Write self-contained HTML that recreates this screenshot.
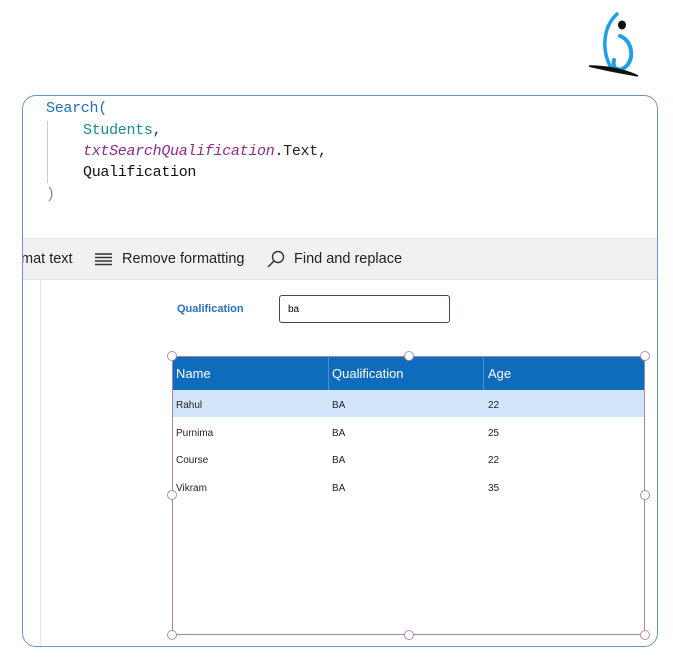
<!DOCTYPE html>
<html><head><style>
body{margin:0;width:673px;height:659px;background:#fff;position:relative;overflow:hidden;font-family:"Liberation Sans",sans-serif}
.frame{position:absolute;left:22px;top:95px;width:634px;height:550px;border:1.5px solid #6f93bd;border-radius:14px;overflow:hidden;background:#fff}
.code{position:absolute;font-family:"Liberation Mono",monospace;font-size:15px;white-space:pre;line-height:21.5px;letter-spacing:-0.3px}
.tb{position:absolute;left:0;top:142px;width:100%;height:40px;background:#f1f1f1;border-bottom:1px solid #e2e2e2;border-top:1px solid #e6e6e6}
.tb span{position:absolute;top:12px;font-size:14.5px;color:#222}
.abs{position:absolute}
.h{position:absolute;width:8px;height:8px;border:1.5px solid #b08cb0;border-radius:50%;background:#fff}
.cell{position:absolute;font-size:10px;color:#222}
</style></head><body>
<svg class="abs" style="left:586px;top:8px" width="60" height="70" viewBox="0 0 60 70">
<path d="M31 6 C18 18 14 40 26 62" fill="none" stroke="#1da1e6" stroke-width="3.5" stroke-linecap="round"/>
<path d="M34 28 C46 32 50 52 38 60 C32 64 26 60 28 52" fill="none" stroke="#1da1e6" stroke-width="4" stroke-linecap="round"/>
<ellipse cx="36" cy="17" rx="4" ry="4.5" fill="#111"/>
<path d="M3 58 C22 58 40 62 52 68 C36 65 18 62 3 58Z" fill="#111" stroke="#111" stroke-width="1.5"/>
</svg>
<div class="frame">
<div class="code" style="left:23px;top:2px;color:#1e6fb5">Search(</div>
<div class="abs" style="left:24px;top:25px;width:1px;height:62px;background:#ccc"></div>
<div class="code" style="left:60px;top:24px;color:#1a8a8a">Students<span style="color:#333">,</span></div>
<div class="code" style="left:60px;top:45px;color:#8b2b8b;font-style:italic">txtSearchQualification<span style="color:#222;font-style:normal">.Text,</span></div>
<div class="code" style="left:60px;top:66px;color:#111">Qualification</div>
<div class="code" style="left:23px;top:88px;color:#888">)</div>
<div class="tb">
<span style="left:-2px">mat text</span>
<svg class="abs" style="left:72px;top:13px" width="17" height="15"><g stroke="#333" stroke-width="1.4"><line x1="0" y1="2" x2="17" y2="2"/><line x1="0" y1="5.5" x2="17" y2="5.5"/><line x1="0" y1="9" x2="17" y2="9"/><line x1="0" y1="12.5" x2="17" y2="12.5"/></g></svg>
<span style="left:99px">Remove formatting</span>
<svg class="abs" style="left:244px;top:11px" width="18" height="18"><circle cx="11" cy="7" r="5.5" fill="none" stroke="#333" stroke-width="1.4"/><line x1="7" y1="11" x2="1" y2="17" stroke="#333" stroke-width="1.5"/></svg>
<span style="left:271px">Find and replace</span>
</div>
<div class="abs" style="left:17px;top:183px;width:1px;height:370px;background:#e8e8e8"></div>
</div>
<div class="abs" style="left:177px;top:303px;font-size:11px;font-weight:bold;color:#2b6fc0">Qualification</div>
<div class="abs" style="left:279px;top:295px;width:169px;height:26px;border:1.5px solid #3c4a5a;border-radius:3px;background:#fff"><span style="position:absolute;left:8px;top:8px;font-size:10px">ba</span></div>
<div class="abs" style="left:172px;top:356px;width:473px;height:279px;border:1.5px solid #a488aa;box-sizing:border-box"></div>
<div class="abs" style="left:173px;top:357px;width:471px;height:33px;background:#0f6cbd"></div>
<div class="abs" style="left:328px;top:357px;width:1px;height:33px;background:#4a8fd0"></div>
<div class="abs" style="left:483px;top:357px;width:1px;height:33px;background:#4a8fd0"></div>
<div class="abs" style="left:173px;top:390px;width:471px;height:27px;background:#d3e5f8"></div>
<div class="abs" style="left:176px;top:366px;color:#fff;font-size:13px">Name</div>
<div class="abs" style="left:332px;top:366px;color:#fff;font-size:13px">Qualification</div>
<div class="abs" style="left:488px;top:366px;color:#fff;font-size:13px">Age</div>
<div class="cell" style="left:176px;top:400px">Rahul</div><div class="cell" style="left:332px;top:400px">BA</div><div class="cell" style="left:488px;top:400px">22</div>
<div class="cell" style="left:176px;top:428px">Purnima</div><div class="cell" style="left:332px;top:428px">BA</div><div class="cell" style="left:488px;top:428px">25</div>
<div class="cell" style="left:176px;top:455px">Course</div><div class="cell" style="left:332px;top:455px">BA</div><div class="cell" style="left:488px;top:455px">22</div>
<div class="cell" style="left:176px;top:483px">Vikram</div><div class="cell" style="left:332px;top:483px">BA</div><div class="cell" style="left:488px;top:483px">35</div>
<div class="h" style="left:167px;top:351px"></div><div class="h" style="left:404px;top:351px"></div><div class="h" style="left:640px;top:351px"></div>
<div class="h" style="left:167px;top:490px"></div><div class="h" style="left:640px;top:490px"></div>
<div class="h" style="left:167px;top:630px"></div><div class="h" style="left:404px;top:630px"></div><div class="h" style="left:640px;top:630px"></div>
</body></html>
